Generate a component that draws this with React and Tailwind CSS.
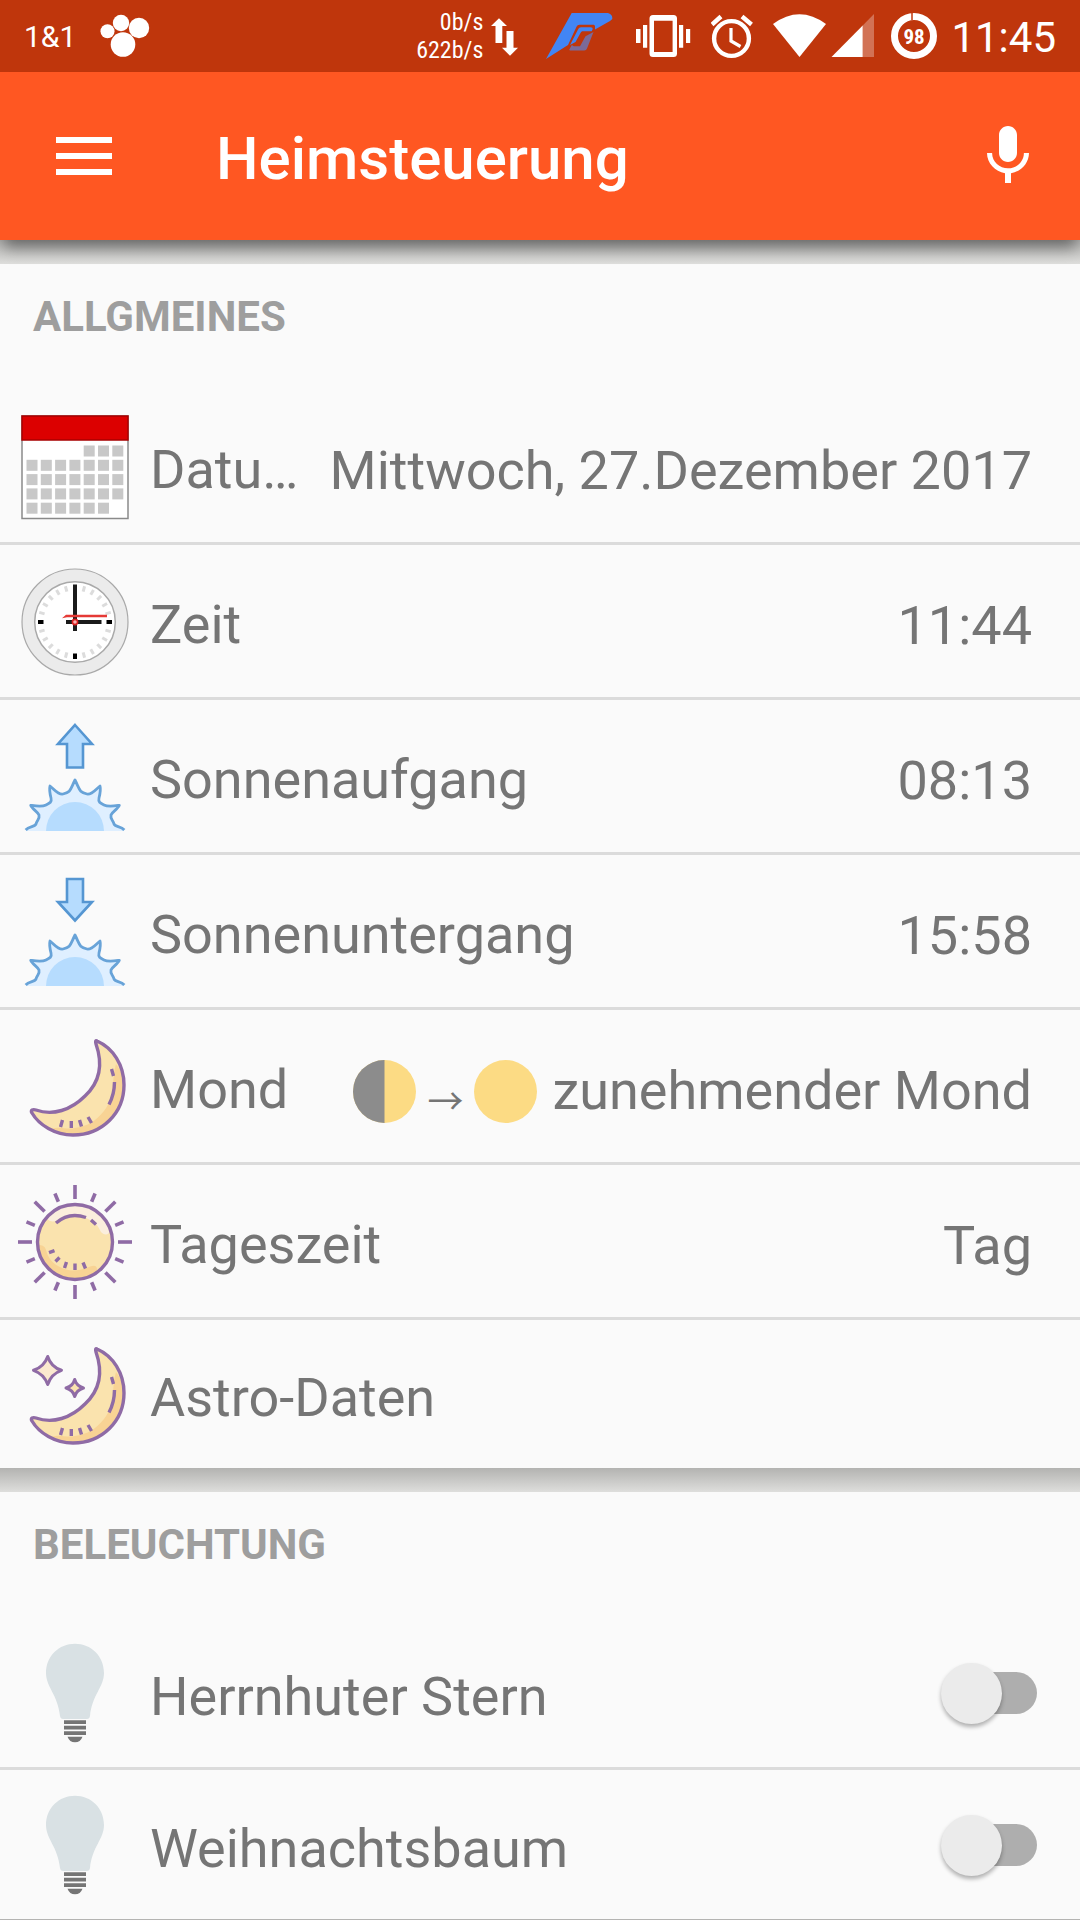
import { useState } from "react";

// --- Status bar icons ---
const PawIcon = () => (
  <svg className="h-12 w-[50px]" viewBox="0 0 50 48" fill="#fff">
    <circle cx="7.5" cy="19.3" r="7" />
    <circle cx="21" cy="11" r="8.2" />
    <circle cx="39" cy="16" r="10.2" />
    <circle cx="23" cy="32.5" r="12.3" />
  </svg>
);

const TrafficIcon = () => (
  <svg className="h-12 w-10" viewBox="0 0 40 48" fill="#fff">
    <path d="M8 6.3l8 7.7h-4.7v17H4.500V14H0z" />
    <path d="M19 43.700l-8-8h4.500V19h7v16.700H27z" />
  </svg>
);

const NovaIcon = () => (
  <svg className="h-12 w-20" viewBox="0 0 80 48">
    <path fill="#4285f4" d="M3 47L28.700 1H63.700c3.500 0 6 2.500 5.600 6L67 9 52 17.500v-3c0-1.300-.700-1.800-2-1.800H36.500c-1.500 0-2.300.700-3 2L25 33z" />
    <path fill="#4285f4" d="M27 33l8-15.500c.8-1.500 1.600-2.200 3-2.200h9.500c1.800 0 2.500.7 2 2.200l-.8 1.700H40c-1 0-1.700.5-2.200 1.300L32.500 30z" />
    <path fill="#7b6a99" d="M26.300 37.500l2.500-4.500 2 1.200H37l5.500-10 8-4.200-6.500 16.500c-.6 1.300-1.400 2-2.700 2H28c-1.200 0-1.800-.3-1.700-1z" />
  </svg>
);

const VibrateIcon = () => (
  <svg className="h-12 w-16" viewBox="0 0 64 48" fill="#fff">
    <path fillRule="evenodd" d="M18 3h20.500a3.500 3.500 0 0 1 3.500 3.500v35a3.500 3.500 0 0 1-3.500 3.500H18a3.500 3.500 0 0 1-3.500-3.500v-35A3.500 3.500 0 0 1 18 3zM19 8.700V40h18.600V8.700z" />
    <path d="M8 13h4.200v22.700H8zM1 17h4.500v14H1zM44 13h4.200v22.700H44zM51 17h4.200v14H51z" />
  </svg>
);

const AlarmIcon = () => (
  <svg className="h-12 w-12" viewBox="0 0 48 48" fill="none" stroke="#fff">
    <circle cx="20.500" cy="26.500" r="17.400" strokeWidth="4.400" />
    <path strokeWidth="3.200" d="M20 16v13l9.500 5.500" />
    <path strokeWidth="4.400" d="M1 12.500l9-8M31 4.500l9.500 8" />
  </svg>
);

const WifiIcon = () => (
  <svg className="h-12 w-14" viewBox="0 0 56 48" fill="#fff">
    <path d="M2 12Q28.500-7.500 55 12L28.500 45z" />
  </svg>
);

const SignalIcon = () => (
  <svg className="h-12 w-[52px]" viewBox="0 0 52 48" fill="#fff">
    <path opacity=".3" d="M35.700 45V13.500L47 2v43z" />
    <path d="M4.500 45L35.700 13.500V45z" />
  </svg>
);

const BatteryIcon = () => (
  <svg className="h-12 w-12" viewBox="0 0 48 48">
    <circle cx="23" cy="24" r="19.500" fill="none" stroke="#fff" strokeWidth="7" />
    <path stroke="#bf360c" strokeWidth="1.500" d="M21 0v8" />
    <text x="23" y="32" textAnchor="middle" fill="#fff" fontSize="21" fontWeight="700" fontFamily="Roboto Condensed, Roboto, sans-serif">98</text>
  </svg>
);

// --- App bar icons ---
const MenuIcon = () => (
  <svg className="h-[38px] w-14" viewBox="0 0 56 38" fill="#fff">
    <path d="M0 0h56v6H0zM0 16h56v6H0zM0 32h56v6H0z" />
  </svg>
);

const MicIcon = () => (
  <svg className="size-[72px]" viewBox="0 0 24 24" fill="#fff">
    <path d="M12 14c1.660 0 3-1.340 3-3V5c0-1.660-1.340-3-3-3S9 3.340 9 5v6c0 1.660 1.340 3 3 3zm5.300-3c0 3-2.540 5.100-5.300 5.100S6.700 14 6.700 11H5c0 3.410 2.720 6.230 6 6.720V21h2v-3.280c3.280-.480 6-3.300 6-6.720h-1.700z" />
  </svg>
);

// --- Row icons, all on a 120 grid ---
const RowIcon = ({ children }) => (
  <svg className="size-[120px] shrink-0" viewBox="0 0 120 120" fill="none">
    {children}
  </svg>
);

const CalendarIcon = () => {
  const days = [];
  for (let row = 0; row < 5; row++) {
    for (let col = 0; col < 7; col++) {
      if (row === 0 && col < 4) continue;
      if (row === 4 && col === 6) continue;
      days.push(<rect key={`${row}-${col}`} x={11.5 + col * 14.3} y={39.5 + row * 14.3} width="11" height="11" fill="#c8c8c8" />);
    }
  }
  return (
    <RowIcon>
      <rect x="7" y="10" width="106" height="102.500" fill="#fff" stroke="#8a8a8a" strokeWidth="1.500" />
      <rect x="7" y="10" width="106" height="24" fill="#dc0000" stroke="#a80000" strokeWidth="1.500" />
      {days}
    </RowIcon>
  );
};

const ClockIcon = () => (
  <RowIcon>
    <circle cx="60" cy="61" r="53" fill="#ebebeb" stroke="#a9a9a9" strokeWidth="1.200" />
    <circle cx="60" cy="61" r="40.300" fill="#fff" stroke="#a9a9a9" strokeWidth="1.500" />
    {Array.from({ length: 24 }, (_, i) => (
      <path
        key={i}
        d="M60 24v5.500"
        transform={`rotate(${i * 15} 60 61)`}
        stroke={i % 6 === 0 ? "#000" : "#dcdcdc"}
        strokeWidth={i % 6 === 0 ? 4 : 3}
      />
    ))}
    <path stroke="#1a1a1a" strokeWidth="4" d="M60 23.500V70M51 61h35.500" />
    <path fill="#e53935" d="M47 57.200l4-3.500h41v2.600H52z" />
    <circle cx="60" cy="61" r="2.600" fill="#f6b5b5" stroke="#d81e1e" strokeWidth="1.600" />
  </RowIcon>
);

const HalfSun = () => (
  <>
    <path
      fill="#dfefff"
      d="M10.700 115C14 110 20 111 21 108C22 104 25 103 24 99C23 96 17 93 15.700 89.300C21 90 27 91 31 89C35 87 37 86 36 82C35 78 34 74 35 70C39 73 43 79 48 78C56 76 55 74 60 64C65 74 64 76 72 78C77 79 81 73 85 70C86 74 85 78 84 82C83 86 85 87 89 89C93 91 99 90 104.300 89.300C103 93 97 96 96 99C95 103 98 104 99 108C100 111 106 110 109.300 115z"
    />
    <path
      stroke="#68a3d8"
      strokeWidth="2.800"
      strokeLinejoin="round"
      d="M10.700 114C14 110 20 111 21 108C22 104 25 103 24 99C23 96 17 93 15.700 89.300C21 90 27 91 31 89C35 87 37 86 36 82C35 78 34 74 35 70C39 73 43 79 48 78C56 76 55 74 60 64C65 74 64 76 72 78C77 79 81 73 85 70C86 74 85 78 84 82C83 86 85 87 89 89C93 91 99 90 104.300 89.300C103 93 97 96 96 99C95 103 98 104 99 108C100 111 106 110 109.300 114"
    />
    <path fill="#b6dcfe" d="M31 115a29 29 0 0 1 58 0z" />
  </>
);

const SunriseIcon = () => (
  <RowIcon>
    <path fill="#b6dcfe" stroke="#5596d2" strokeWidth="2.600" d="M60 9L77 28h-9v23.500H52V28h-9z" />
    <HalfSun />
  </RowIcon>
);

const SunsetIcon = () => (
  <RowIcon>
    <path fill="#b6dcfe" stroke="#5596d2" strokeWidth="2.600" d="M60 49.500L77 31h-9V8H52v23h-9z" />
    <HalfSun />
  </RowIcon>
);

const Crescent = () => (
  <>
    <path fill="#fae3ae" d="M82 15C98 22 109 39 109 59C109 87 87 109 58 109C40 109 24 99 17 87C15 84 18 83 21 84C38 90 56 84 70 70C85 56 88 38 81 18z" />
    <path fill="#f8d394" d="M101 38c6 8 8 14 8 21 0 28-22 50-51 50-9 0-16-3-21-6 8-3 14 1 23-1 12-2 20-6 29-17 12-15 7-30 12-47z" />
    <path
      stroke="#8f6ba5"
      strokeWidth="3.400"
      strokeLinejoin="round"
      d="M82 15C98 22 109 39 109 59C109 87 87 109 58 109C40 109 24 99 17 87C15 84 18 83 21 84C38 90 56 84 70 70C85 56 88 38 81 18C80 15 81 14 82 15z"
    />
    <path
      stroke="#8f6ba5"
      strokeWidth="3.400"
      d="M96.500 43l2 7M99.500 56q0 12-5.500 22.500M47.500 94l-2 7M56.300 95v7M64.500 94l2 6.500M73 91l3.500 6"
    />
  </>
);

const MoonIcon = () => (
  <RowIcon>
    <Crescent />
  </RowIcon>
);

const AstroIcon = () => (
  <RowIcon>
    <Crescent />
    <g stroke="#8f6ba5" strokeWidth="3" strokeLinejoin="round">
      <path fill="#fbe9cf" d="M32.700 22.500Q36 33 46.500 36.300Q36 40 32.700 50.500Q29 40 18.500 36.300Q29 33 32.700 22.500z" />
      <path fill="#fae3ae" d="M59.700 45.500Q61.500 52 68.500 54Q61.500 56 59.700 62.500Q58 56 51 54Q58 52 59.700 45.500z" />
    </g>
  </RowIcon>
);

const SunIcon = () => (
  <RowIcon>
    {Array.from({ length: 16 }, (_, i) => (
      <path
        key={i}
        d={i % 2 === 0 ? "M60 4v14" : "M60 8.500v9"}
        transform={`rotate(${i * 22.5} 60 61)`}
        stroke="#8f6ba5"
        strokeWidth="3.600"
      />
    ))}
    <circle cx="60" cy="61" r="37.500" fill="#fae3ae" />
    <path fill="#fbeedd" d="M31 37a37.500 37.500 0 0 1 64 12c0 5-6 6-9 2-3-6-5-9-11-12-9-5-18-6-28-2-6 3-10 6-16 0z" />
    <path fill="#f8d394" d="M23 64c4 0 7 1 8 5 2 7 5 12 12 16 10 6 20 5 28 2 6-2 12-5 11 4a37.500 37.500 0 0 1-59-27z" />
    <circle cx="60" cy="61" r="37.500" stroke="#8f6ba5" strokeWidth="3.400" />
    <path
      stroke="#8f6ba5"
      strokeWidth="3.400"
      d="M41 42Q54 30.500 71 36.500M76 39l5 4.500M34 71.700l5.500-2M40.500 80.500l4-4M49.500 87l2-6M60 82.500v6.500M68 81.500l2.500 6"
    />
  </RowIcon>
);

const BulbIcon = () => (
  <RowIcon>
    <path fill="#d9e1e4" d="M60 10.700C76 10.700 89 23 89 40C89 54 77 62 75 83Q74.500 86 72 86H48Q45.500 86 45 83C43 62 31 54 31 40C31 23 44 10.700 60 10.700z" />
    <path fill="#757575" d="M49 87.300h22V91H49zM49 92.800h22v3.800H49zM49 98.200h22v3.800H49zM52.500 103.700h15q-2 5.500-7.500 5.500t-7.500-5.500z" />
  </RowIcon>
);

const MoonPhase = () => (
  <span className="flex items-center">
    <svg className="size-[63px]" viewBox="0 0 64 64">
      <circle cx="32" cy="32" r="32" fill="#fcdb84" />
      <path fill="#8c8c8c" d="M32 0a32 32 0 0 0 0 64z" />
    </svg>
    <span className="w-[58px] pt-4 text-center font-['Noto_Sans_CJK_JP',sans-serif] text-[36px] leading-[48px]">→</span>
    <svg className="mr-[15px] size-[63px]" viewBox="0 0 64 64">
      <circle cx="32" cy="32" r="32" fill="#fcdb84" />
    </svg>
  </span>
);

const general = [
  { label: "Datu…", icon: CalendarIcon, value: "Mittwoch, 27.Dezember 2017" },
  { label: "Zeit", icon: ClockIcon, value: "11:44" },
  { label: "Sonnenaufgang", icon: SunriseIcon, value: "08:13" },
  { label: "Sonnenuntergang", icon: SunsetIcon, value: "15:58" },
  { label: "Mond", icon: MoonIcon, value: "zunehmender Mond", before: <MoonPhase /> },
  { label: "Tageszeit", icon: SunIcon, value: "Tag" },
  { label: "Astro-Daten", icon: AstroIcon },
];

const lights = [
  { id: "stern", label: "Herrnhuter Stern" },
  { id: "baum", label: "Weihnachtsbaum" },
];

const StatusBar = () => (
  <div className="flex h-[72px] items-center bg-[#bf360c] pr-6 pl-6 text-white">
    <span className="mr-6 pt-px text-[30px] leading-9">1&amp;1</span>
    <PawIcon />
    <div className="ml-auto flex items-center gap-3">
      <div className="flex items-center gap-2">
        <div className="text-right font-['Roboto_Condensed',Roboto,sans-serif] text-[24px] leading-7">
          <p>0b/s</p>
          <p>622b/s</p>
        </div>
        <TrafficIcon />
      </div>
      <NovaIcon />
      <VibrateIcon />
      <AlarmIcon />
      <div className="flex">
        <WifiIcon />
        <SignalIcon />
      </div>
      <BatteryIcon />
      <span className="pt-1 text-[42px] leading-[48px]">11:45</span>
    </div>
  </div>
);

const AppBar = () => (
  <header className="relative z-10 flex h-[168px] items-center bg-[#ff5722] pr-9 pl-14 text-white shadow-[0_12px_14px_-4px_rgba(0,0,0,0.4)]">
    <button type="button" aria-label="Menü">
      <MenuIcon />
    </button>
    <h1 className="ml-26 flex-1 pt-[6px] text-[60px] leading-[72px] font-medium">Heimsteuerung</h1>
    <button type="button" aria-label="Spracheingabe">
      <MicIcon />
    </button>
  </header>
);

const Section = ({ title, children }) => (
  <section>
    <h2 className="px-[33px] pt-[29px] pb-[49px] text-[42px] leading-[48px] font-bold text-[#9e9e9e] uppercase">{title}</h2>
    <ul className="divide-y-3 divide-[#dbdbdb]">{children}</ul>
  </section>
);

const SectionGap = () => <div className="h-6 shrink-0 bg-linear-to-b from-[#b3b3b1] to-[#dededc]" />;

const InfoRow = ({ icon: Icon, label, value, before }) => (
  <li className="flex items-center pl-[15px]">
    <Icon />
    <span className={`min-w-0 flex-1 truncate pt-2 pl-[15px] leading-[72px] ${value ? "my-9" : "my-[34px]"}`}>{label}</span>
    {value && (
      <span className="mr-12 ml-5 flex shrink-0 items-center pt-[10px]">
        {before}
        <span className="leading-[72px]">{value}</span>
      </span>
    )}
  </li>
);

const SwitchRow = ({ id, label }) => {
  const [on, setOn] = useState(false);

  return (
    <li className="flex items-center pl-[15px]">
      <BulbIcon />
      <label htmlFor={id} className="my-[34px] min-w-0 flex-1 truncate pt-[9px] pl-[15px] leading-[72px]">
        {label}
      </label>
      <input
        id={id}
        type="checkbox"
        role="switch"
        checked={on}
        onChange={(e) => setOn(e.target.checked)}
        className="relative mr-[43px] h-[42px] w-[87px] shrink-0 appearance-none rounded-full bg-[#aeaeae] before:absolute before:-top-[9px] before:-left-[9px] before:size-[61px] before:rounded-full before:bg-[#ebebeb] before:shadow-[0_3px_4px_rgba(0,0,0,0.3)] checked:bg-[#ffab91] checked:before:left-9 checked:before:bg-[#ff5722]"
      />
    </li>
  );
};

const App = () => {
  return (
    <div className="flex h-screen flex-col overflow-hidden bg-[#fafafa] font-[Roboto,sans-serif] text-[#757575]">
      <StatusBar />
      <AppBar />
      <main className="min-h-0 flex-1 overflow-hidden text-[54px]">
        <SectionGap />
        <Section title="Allgmeines">
          {general.map((item) => (
            <InfoRow key={item.label} {...item} />
          ))}
        </Section>
        <SectionGap />
        <Section title="Beleuchtung">
          {lights.map((item) => (
            <SwitchRow key={item.id} {...item} />
          ))}
        </Section>
        <SectionGap />
      </main>
    </div>
  );
};

export default App;
